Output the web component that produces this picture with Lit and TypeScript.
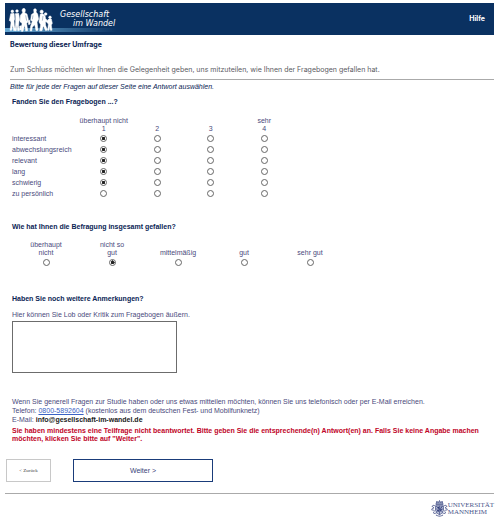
import { LitElement, html, css, svg } from "lit";
import { customElement, state } from "lit/decorators.js";

const ITEMS = ["interessant", "abwechslungsreich", "relevant", "lang", "schwierig", "zu persönlich"];
const SCALE = [
  { top: "überhaupt nicht", value: 1 },
  { top: "", value: 2 },
  { top: "", value: 3 },
  { top: "sehr", value: 4 },
];
const RATINGS = ["überhaupt nicht", "nicht so gut", "mittelmäßig", "gut", "sehr gut"];

const walkers = svg`
  <g fill="#fff" stroke="#fff" stroke-width="1.5" stroke-linejoin="round">
    <circle cx="37" cy="34" r="4"/>
    <path d="M32 41 L42 40 L45 58 L42 62 L43 76 L46 91 L41 92 L38 76 L35 91 L30 91 L33 68 L31 62 L28 62 Z"/>
    <circle cx="51" cy="33" r="4"/>
    <path d="M46 41 L56 40 L59 60 L57 64 L56 78 L58 92 L53 92 L51 74 L49 92 L45 92 L47 66 Z"/>
    <path d="M66 31 Q67 25 72 25 Q77 26 76 33 L74 38 L81 42 L85 58 L83 67 L80 70 L83 92 L77 93 L74 76 L69 94 L64 94 L66 70 L60 65 L61 46 L68 38 Z"/>
    <path d="M101 29 Q103 24 108 27 Q111 31 108 36 L113 42 L116 58 L111 66 L114 91 L108 92 L104 74 L97 82 L95 93 L90 92 L92 78 L97 64 L92 61 L94 44 L102 38 Z"/>
    <path d="M59 78 L65 77 L65 90 L59 90 Z M84 62 L89 60 L91 72 L86 74 Z"/>
    <circle cx="125" cy="35" r="5"/>
    <path d="M121 42 L129 41 L135 47 L137 56 L141 60 L140 66 L136 65 L137 76 L142 90 L137 92 L130 78 L126 92 L119 92 L122 74 L117 66 Z"/>
    <circle cx="137" cy="42" r="4"/>
    <circle cx="150" cy="52" r="4"/>
    <path d="M146 57 L154 57 L157 70 L154 75 L156 91 L151 91 L149 79 L147 91 L143 91 L145 72 L139 65 L141 62 Z"/>
  </g>
  <g stroke="#0a3161" stroke-width="1" fill="none">
    <path d="M45 46 V60 M77 46 L80 62 M99 46 L97 58 M129 48 L127 62"/>
  </g>`;

const crest = svg`
  <g fill="none" stroke="#4a568c" stroke-width="2.4">
    <path d="M14 17 H38 V31 Q37 39 26 45 Q15 39 14 31 Z" fill="#c3c9de"/>
    <path d="M15 18 L37 38 M37 18 L15 38 M26 17 V45 M14 27 H38"/>
    <path d="M15 13 L18 3 L22 8 L26 1 L30 8 L34 3 L37 13 Z" fill="#8c96b9"/>
    <path d="M12 17 Q5 13 3 19 Q7 20 9 24 Q2 24 2 30 Q7 29 11 33 Q5 36 9 41 Q13 38 17 42"/>
    <path d="M40 17 Q47 13 49 19 Q45 20 43 24 Q50 24 50 30 Q45 29 41 33 Q47 36 43 41 Q39 38 35 42"/>
    <path d="M15 46 Q26 53 37 46"/>
  </g>
  <g fill="#2f3c78"><path d="M18 20 L25 20 L25 27 Z M28 28 L35 28 L28 36 Z M17 30 L24 29 L24 37 Z M29 19 L35 19 L30 25 Z"/></g>`;

@customElement("app-root")
export class AppRoot extends LitElement {
  @state() private answers: (number | null)[] = [1, 1, 1, 1, 1, null];
  @state() private overall = 1;

  static styles = css`
    :host {
      display: block;
      box-sizing: border-box;
      padding: 3px 8px 0 5px;
      background: #fff;
      color: #4a4a7c;
      font: 7px/8px "Liberation Sans", Arial, sans-serif;
    }
    header {
      display: flex;
      align-items: center;
      height: 32px;
      background:
        linear-gradient(90deg, #67a9d4, #0a3161) 0 25px / 112px 4px no-repeat,
        #0a3161;
      color: #fff;
    }
    .walkers { width: 50px; height: 32px; }
    .brand {
      flex: 1;
      margin-left: 5px;
      font: italic 8px/9px "DejaVu Sans", Verdana, sans-serif;
    }
    .brand span { display: block; }
    .brand .second { padding-left: 13px; }
    .help {
      margin-right: 9px;
      color: #fff;
      font-family: Inter, "Liberation Sans", sans-serif;
      font-weight: bold;
      text-decoration: none;
    }
    h1, h2, p, fieldset, legend { margin: 0; padding: 0; border: 0; font-size: 7px; }
    h1, h2, legend { color: #0a2454; font-weight: bold; }
    .intro {
      margin-left: 5px;
      padding: 6px 0 5px;
      border-bottom: 1px solid #aaa;
      font-family: Inter, "Liberation Sans", sans-serif;
    }
    .intro p { margin-top: 17px; color: #5a5a62; }
    .hint { margin: 3px 5px 0; color: #0a2454; font-style: italic; }
    .block { padding: 0 7px; }
    .matrix { margin-top: 7px; }
    table { margin-top: 11px; border-collapse: collapse; table-layout: fixed; width: 279px; }
    th, td { padding: 0; font-weight: normal; text-align: center; }
    thead th { height: 16px; vertical-align: bottom; white-space: nowrap; }
    .top { display: block; }
    .name { width: 65px; }
    tbody th { text-align: left; }
    tbody th, tbody td { height: 11px; line-height: 8px; }
    input[type="radio"] {
      appearance: none;
      display: block;
      box-sizing: border-box;
      width: 7px;
      height: 7px;
      margin: 0 auto;
      border: 1px solid #666;
      border-radius: 50%;
      background: #fff;
    }
    input[type="radio"]:checked { background: radial-gradient(circle, #222 0 1px, #555 2px, #fff 2px); }
    .overall { margin-top: 24px; }
    .options { display: flex; margin-top: 10px; padding-left: 1px; }
    .option {
      display: flex;
      flex-direction: column;
      justify-content: flex-end;
      gap: 2px;
      width: 66px;
      height: 25px;
      text-align: center;
    }
    .option span { padding: 0 16px; }
    .option .wide { padding: 0; }
    .comments { margin-top: 29px; }
    .comments label { display: block; margin: 8px 0 2px; }
    textarea {
      display: block;
      box-sizing: border-box;
      width: 165px;
      height: 52px;
      padding: 2px;
      border: 1px solid #6c6c6c;
      border-radius: 0;
      font: inherit;
      resize: none;
    }
    .contact { margin-top: 25px; }
    .contact p + p { margin-top: 1px; }
    .contact .phone { color: #3a62c4; }
    .contact .mail { color: #222; font-weight: bold; text-decoration: none; }
    .contact p.warning { margin-top: 3px; color: #c00428; font-weight: bold; }
    .actions {
      display: flex;
      gap: 22px;
      margin-top: 16px;
      padding: 0 1px 11px;
      border-bottom: 1px solid #aaa;
    }
    button {
      height: 23px;
      padding: 0;
      border: 1px solid #1a3c7a;
      border-radius: 0;
      background: #fff;
      color: #3a4478;
      font: inherit;
    }
    .back {
      width: 45px;
      border-color: #c8c8c8;
      color: #444;
      font: 5px/8px "Liberation Serif", serif;
    }
    .next { width: 140px; }
    footer { display: flex; justify-content: flex-end; align-items: center; margin-top: 6px; }
    .crest { width: 17px; height: 18px; }
    .uni { color: #4a568c; font: 7px/7px "Liberation Serif", serif; }
    .uni span { display: block; }
  `;

  private matrix() {
    return html`<table aria-labelledby="q1">
      <thead>
        <tr>
          <td class="name"></td>
          ${SCALE.map((s) => html`<th scope="col" id="c${s.value}"><span class="top">${s.top}</span>${s.value}</th>`)}
        </tr>
      </thead>
      <tbody>
        ${ITEMS.map((item, r) => html`<tr>
          <th scope="row" id="r${r}">${item}</th>
          ${SCALE.map((s) => html`<td>
            <input type="radio" name="item${r}" aria-labelledby="r${r} c${s.value}"
              .checked=${this.answers[r] === s.value}
              @change=${() => (this.answers = this.answers.map((a, i) => (i === r ? s.value : a)))}>
          </td>`)}
        </tr>`)}
      </tbody>
    </table>`;
  }

  render() {
    return html`
      <header>
        <svg class="walkers" viewBox="15 9 150 96" aria-hidden="true">${walkers}</svg>
        <div class="brand"><span>Gesellschaft</span><span class="second">im Wandel</span></div>
        <a class="help" href="#hilfe">Hilfe</a>
      </header>
      <main>
        <section class="intro">
          <h1>Bewertung dieser Umfrage</h1>
          <p>Zum Schluss möchten wir Ihnen die Gelegenheit geben, uns mitzuteilen, wie Ihnen der Fragebogen gefallen hat.</p>
        </section>
        <p class="hint">Bitte für jede der Fragen auf dieser Seite eine Antwort auswählen.</p>
        <section class="block matrix">
          <h2 id="q1">Fanden Sie den Fragebogen ...?</h2>
          ${this.matrix()}
        </section>
        <fieldset class="block overall">
          <legend>Wie hat Ihnen die Befragung insgesamt gefallen?</legend>
          <div class="options">
            ${RATINGS.map((text, i) => html`<label class="option">
              <span class=${i > 1 ? "wide" : ""}>${text}</span>
              <input type="radio" name="overall" .checked=${this.overall === i} @change=${() => (this.overall = i)}>
            </label>`)}
          </div>
        </fieldset>
        <section class="block comments">
          <h2>Haben Sie noch weitere Anmerkungen?</h2>
          <label for="remarks">Hier können Sie Lob oder Kritik zum Fragebogen äußern.</label>
          <textarea id="remarks"></textarea>
        </section>
        <section class="block contact">
          <p>Wenn Sie generell Fragen zur Studie haben oder uns etwas mitteilen möchten, können Sie uns telefonisch oder per E-Mail erreichen.</p>
          <p>Telefon: <a class="phone" href="tel:08005892604">0800-5892604</a> (kostenlos aus dem deutschen Fest- und Mobilfunknetz)</p>
          <p>E-Mail: <a class="mail" href="mailto:info@gesellschaft-im-wandel.de">info@gesellschaft-im-wandel.de</a></p>
          <p class="warning">Sie haben mindestens eine Teilfrage nicht beantwortet. Bitte geben Sie die entsprechende(n) Antwort(en) an. Falls Sie keine Angabe machen möchten, klicken Sie bitte auf "Weiter".</p>
        </section>
        <div class="actions">
          <button class="back" type="button">&lt; Zurück</button>
          <button class="next" type="button">Weiter &gt;</button>
        </div>
      </main>
      <footer>
        <svg class="crest" viewBox="0 0 52 54" aria-hidden="true">${crest}</svg>
        <div class="uni"><span>UNIVERSITÄT</span><span>MANNHEIM</span></div>
      </footer>
    `;
  }
}
